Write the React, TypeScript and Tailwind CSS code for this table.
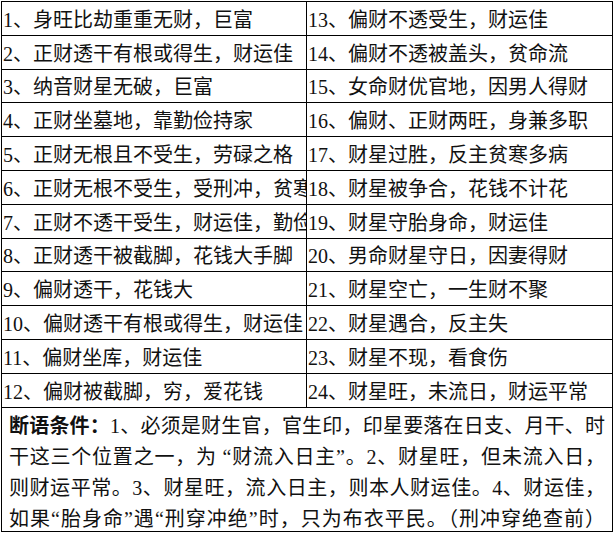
import React from "react";

const left = [
  "1、身旺比劫重重无财，巨富",
  "2、正财透干有根或得生，财运佳",
  "3、纳音财星无破，巨富",
  "4、正财坐墓地，靠勤俭持家",
  "5、正财无根且不受生，劳碌之格",
  "6、正财无根不受生，受刑冲，贫寒",
  "7、正财不透干受生，财运佳，勤俭",
  "8、正财透干被截脚，花钱大手脚",
  "9、偏财透干，花钱大",
  "10、偏财透干有根或得生，财运佳",
  "11、偏财坐库，财运佳",
  "12、偏财被截脚，穷，爱花钱",
];

const right = [
  "13、偏财不透受生，财运佳",
  "14、偏财不透被盖头，贫命流",
  "15、女命财优官地，因男人得财",
  "16、偏财、正财两旺，身兼多职",
  "17、财星过胜，反主贫寒多病",
  "18、财星被争合，花钱不计花",
  "19、财星守胎身命，财运佳",
  "20、男命财星守日，因妻得财",
  "21、财星空亡，一生财不聚",
  "22、财星遇合，反主失",
  "23、财星不现，看食伤",
  "24、财星旺，未流日，财运平常",
];

const App = () => {
  return (
    <div className="w-[614px] h-[534px] bg-white pt-[1px] pl-[1px] text-[#111] font-['Liberation_Serif','Noto_Sans_CJK_SC',serif]">
      <div className="w-[612px] border-l border-t border-black">
        <div className="grid grid-cols-[305px_306px]">
          {left.map((l, i) => (
            <React.Fragment key={i}>
              <div className="h-[33.8px] border-r border-b border-black flex items-center overflow-hidden whitespace-nowrap text-[20px] leading-none pl-[1px] pt-[3px]">
                {l}
              </div>
              <div className="h-[33.8px] border-r border-b border-black flex items-center overflow-hidden whitespace-nowrap text-[20px] leading-none pl-[1px] pt-[3px]">
                {right[i]}
              </div>
            </React.Fragment>
          ))}
        </div>
        <div className="h-[124px] border-r border-b border-black px-[7px] pt-[3px] text-[20px] leading-[31px]">
          <div className="text-justify [text-align-last:justify]">
            <b>断语条件：</b>1、必须是财生官，官生印，印星要落在日支、月干、时
          </div>
          <div className="text-justify [text-align-last:justify]">
            干这三个位置之一，为 “财流入日主”。2、财星旺，但未流入日，
          </div>
          <div className="text-justify [text-align-last:justify]">
            则财运平常。3、财星旺，流入日主，则本人财运佳。4、财运佳，
          </div>
          <div className="text-justify [text-align-last:justify] whitespace-nowrap">
            如果“胎身命”遇“刑穿冲绝”时，只为布衣平民。（刑冲穿绝查前）
          </div>
        </div>
      </div>
    </div>
  );
};

export default App;
